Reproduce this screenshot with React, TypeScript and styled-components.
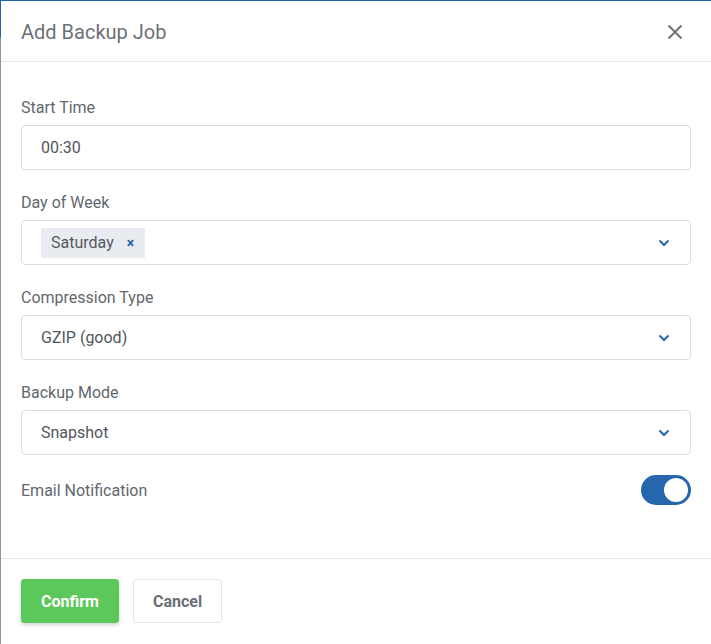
import React, { useState } from "react";
import styled, { createGlobalStyle } from "styled-components";

const GlobalStyle = createGlobalStyle`
  html, body {
    margin: 0;
    padding: 0;
    background: #ffffff;
  }
  body {
    font-family: Roboto, "Liberation Sans", Arial, sans-serif;
  }
`;

// page behind the dialog: blue header strip, grey edge
const Backdrop = styled.div`
  width: 711px;
  height: 644px;
  box-sizing: border-box;
  padding: 1px 0 0 1px;
  background: linear-gradient(to bottom, #2563a8 0, #2563a8 37px, #8f959b 37px);
  overflow: hidden;
`;

const Modal = styled.div`
  height: 100%;
  background: #fff;
  display: flex;
  flex-direction: column;
`;

const Header = styled.div`
  height: 60px;
  display: flex;
  align-items: center;
  justify-content: space-between;
  padding: 0 20px 0 20px;
  border-bottom: 1px solid #e6e7ec;
  flex-shrink: 0;
`;

const Title = styled.h5`
  margin: 0;
  font-size: 20px;
  font-weight: 400;
  color: #6c7078;
  margin-top: 1px;
`;

const CloseButton = styled.button`
  border: 0;
  background: none;
  padding: 0;
  width: 20px;
  height: 20px;
  display: flex;
  align-items: center;
  justify-content: center;
  cursor: pointer;
  margin-right: 6px;
  margin-top: 1px;
`;

const Body = styled.div`
  flex: 1;
  padding: 36px 20px 0 20px;
  display: flex;
  flex-direction: column;
`;

const Field = styled.div`
  display: flex;
  flex-direction: column;
  margin-bottom: 23px;
`;

const Label = styled.label`
  font-size: 16px;
  line-height: 20px;
  color: #62676e;
  margin-bottom: 7px;
`;

const Box = styled.div`
  height: 45px;
  box-sizing: border-box;
  border: 1px solid #dcdce4;
  border-radius: 4px;
  display: flex;
  align-items: center;
  padding: 0 20px 0 19px;
  font-size: 16px;
  color: #51565d;
  background: #fff;
`;

const Value = styled.span`
  flex: 1;
`;

const Chip = styled.span`
  display: inline-flex;
  align-items: center;
  height: 30px;
  background: #e8ebf0;
  padding: 0 11px 0 10px;
  gap: 13px;
  color: #555a61;
  font-size: 16px;
`;

const ChipX = styled.span`
  color: #2566ad;
  font-size: 14px;
  font-weight: 700;
`;

const ToggleRow = styled.div`
  display: flex;
  align-items: center;
  justify-content: space-between;
  margin-top: -3px;
`;

const ToggleLabel = styled.span`
  font-size: 16px;
  color: #62676e;
`;

const Switch = styled.button<{ $on: boolean }>`
  width: 50px;
  height: 30px;
  border-radius: 15px;
  border: 0;
  padding: 0;
  background: ${(p) => (p.$on ? "#2566ad" : "#cfd3d8")};
  position: relative;
  cursor: pointer;
  &::after {
    content: "";
    position: absolute;
    top: 3px;
    left: ${(p) => (p.$on ? "23px" : "3px")};
    width: 24px;
    height: 24px;
    border-radius: 50%;
    background: #fff;
  }
`;

const Footer = styled.div`
  border-top: 1px solid #e6e7ec;
  padding: 20px 20px 21px 20px;
  display: flex;
  gap: 14px;
  flex-shrink: 0;
`;

const Button = styled.button<{ $primary?: boolean }>`
  height: 44px;
  box-sizing: border-box;
  border-radius: 3px;
  font-family: Roboto, "Liberation Sans", Arial, sans-serif;
  font-size: 16px;
  font-weight: 700;
  padding: 0 19px;
  cursor: pointer;
  border: 1px solid ${(p) => (p.$primary ? "#5cc85c" : "#e3e4ea")};
  background: ${(p) => (p.$primary ? "#5cc85c" : "#fff")};
  color: ${(p) => (p.$primary ? "#fff" : "#6a6f77")};
  box-shadow: ${(p) => (p.$primary ? "0 2px 4px rgba(0,0,0,0.18)" : "none")};
`;

function Chevron() {
  return (
    <svg width="12" height="8" viewBox="0 0 12 8">
      <path d="M1.5 1.5 L6 6 L10.5 1.5" fill="none" stroke="#2566ad" strokeWidth="2" />
    </svg>
  );
}

function CloseIcon() {
  return (
    <svg width="16" height="16" viewBox="0 0 16 16">
      <path d="M1.5 1.5 L14.5 14.5 M14.5 1.5 L1.5 14.5" stroke="#6c7078" strokeWidth="1.8" fill="none" />
    </svg>
  );
}

export default function App() {
  const [notify, setNotify] = useState(true);
  return (
    <Backdrop>
      <GlobalStyle />
      <Modal>
        <Header>
          <Title>Add Backup Job</Title>
          <CloseButton aria-label="Close">
            <CloseIcon />
          </CloseButton>
        </Header>
        <Body>
          <Field>
            <Label>Start Time</Label>
            <Box>
              <Value>00:30</Value>
            </Box>
          </Field>
          <Field>
            <Label>Day of Week</Label>
            <Box>
              <Value>
                <Chip>
                  Saturday <ChipX>×</ChipX>
                </Chip>
              </Value>
              <Chevron />
            </Box>
          </Field>
          <Field>
            <Label>Compression Type</Label>
            <Box>
              <Value>GZIP (good)</Value>
              <Chevron />
            </Box>
          </Field>
          <Field>
            <Label>Backup Mode</Label>
            <Box>
              <Value>Snapshot</Value>
              <Chevron />
            </Box>
          </Field>
          <ToggleRow>
            <ToggleLabel>Email Notification</ToggleLabel>
            <Switch $on={notify} onClick={() => setNotify(!notify)} />
          </ToggleRow>
        </Body>
        <Footer>
          <Button $primary>Confirm</Button>
          <Button>Cancel</Button>
        </Footer>
      </Modal>
    </Backdrop>
  );
}
